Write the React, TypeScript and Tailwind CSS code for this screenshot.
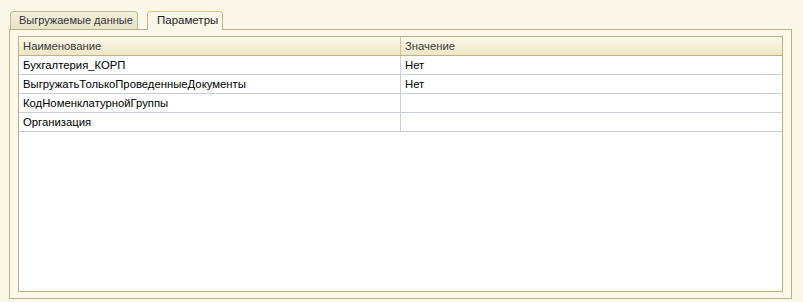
const rows = [
  { name: "Бухгалтерия_КОРП", value: "Нет" },
  { name: "ВыгружатьТолькоПроведенныеДокументы", value: "Нет" },
  { name: "КодНоменклатурнойГруппы", value: "" },
  { name: "Организация", value: "" },
];

export default function App() {
  return (
    <div className="w-[803px] h-[302px] bg-[#fbf8ea] flex flex-col text-[11.3px] text-black font-['Liberation_Sans',Arial,sans-serif] whitespace-nowrap">
      {/* tabs */}
      <div className="flex items-end pl-[10px] pt-[10px] h-[29px] gap-[9px]">
        <div className="h-[18px] w-[128px] border border-b-0 border-[#c4b98c] rounded-t-[4px] bg-gradient-to-b from-[#f4f0de] to-[#e9e3c9] flex items-center pl-[8px] text-[#333] text-[11px]">
          Выгружаемые данные
        </div>
        <div className="h-[19px] w-[76px] border border-b-0 border-[#c4b98c] border-t-[#e8c479] rounded-t-[4px] bg-[#fbf8ea] flex items-center pl-[9px] text-[#222] text-[11.5px] relative top-[1px]">
          Параметры
        </div>
      </div>

      {/* panel */}
      <div className="ml-[9px] mr-[11px] mb-[3px] flex-1 border border-[#bcb183] px-[8px] pt-[6px] pb-[6px] flex">
        <div className="flex-1 border border-[#bcb183] bg-white flex flex-col">
          <div className="flex h-[19px] border-b border-[#bcb183] bg-gradient-to-b from-[#fbf8ec] to-[#efe6c3] text-[#3a3a3a]">
            <div className="w-[382px] pl-[4px] flex items-center border-r border-[#cfc5a0]">Наименование</div>
            <div className="flex-1 pl-[4px] flex items-center">Значение</div>
          </div>
          {rows.map((r) => (
            <div key={r.name} className="flex h-[19px] border-b border-[#c9d0d8]">
              <div className="w-[382px] pl-[4px] flex items-center border-r border-[#c9d0d8]">{r.name}</div>
              <div className="flex-1 pl-[4px] flex items-center">{r.value}</div>
            </div>
          ))}
        </div>
      </div>
    </div>
  );
}
